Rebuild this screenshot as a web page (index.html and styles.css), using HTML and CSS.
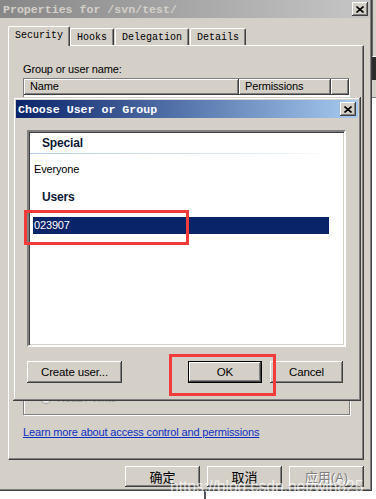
FILE: index.html
```html
<!DOCTYPE html>
<html lang="en">
  <head>
    <meta charset="UTF-8" />
    <title>Properties for /svn/test/</title>
    <link rel="stylesheet" href="styles.css">
  </head>
  <body>
    <div class="screen">
      <div class="window">
        <div class="titlebar inactive">
          <span class="title">Properties for /svn/test/</span>
          <span class="close-btn">
            <svg width="8" height="7" viewBox="0 0 8 7"><path d="M0.5 0.5 L7.5 6.5 M7.5 0.5 L0.5 6.5" stroke="#000" stroke-width="1.6" fill="none"/></svg>
          </span>
        </div>

        <div class="tabs">
          <div class="tab active">Security</div>
          <div class="tab">Hooks</div>
          <div class="tab">Delegation</div>
          <div class="tab">Details</div>
        </div>

        <div class="panel">
          <p class="label">Group or user name:</p>
          <div class="userlist">
            <div class="list-head">
              <div class="col col-name">Name</div>
              <div class="col col-perm">Permissions</div>
              <div class="col col-rest"></div>
            </div>
          </div>
          <div class="perm-box">
            <div class="radio-row"><span class="radio"></span>Read / Write</div>
          </div>
          <a class="learn" href="#">Learn more about access control and permissions</a>
        </div>

        <div class="actions">
          <button class="btn btn-wide">确定</button>
          <button class="btn btn-wide">取消</button>
          <button class="btn btn-wide" disabled>应用(A)</button>
        </div>
      </div>

      <div class="side">
        <div class="side-top"></div>
        <div class="side-dark"></div>
        <div class="side-mid"></div>
      </div>

      <div class="below"><span class="below-line"></span></div>

      <!-- modal over the properties window -->
      <div class="dialog">
        <div class="titlebar active-bar">
          <span class="title">Choose User or Group</span>
          <span class="close-btn">
            <svg width="8" height="7" viewBox="0 0 8 7"><path d="M0.5 0.5 L7.5 6.5 M7.5 0.5 L0.5 6.5" stroke="#000" stroke-width="1.6" fill="none"/></svg>
          </span>
        </div>
        <div class="dialog-body">
          <div class="picklist">
            <div class="group-head">Special</div>
            <div class="item">Everyone</div>
            <div class="group-head no-line">Users</div>
            <div class="item selected">023907</div>
          </div>
          <div class="dialog-actions">
            <button class="btn btn-create">Create user...</button>
            <span class="spacer"></span>
            <button class="btn btn-default">OK</button>
            <button class="btn btn-cancel">Cancel</button>
          </div>
        </div>
      </div>

      <div class="mark mark-user"></div>
      <div class="mark mark-ok"></div>
      <div class="watermark">https://blog.csdn.net/wlh825</div>
    </div>
  </body>
</html>
```

FILE: styles.css
```css
* {
  margin: 0;
  padding: 0;
  box-sizing: border-box;
}

body {
  background: #fff;
  font-family: 'Liberation Sans', Arial, sans-serif;
  font-size: 11px;
  letter-spacing: -0.15px;
  color: #000;
}

.screen {
  position: relative;
  display: grid;
  grid-template-columns: 372px 4px;
  width: 376px;
  height: 499px;
  overflow: hidden;
}

/* Fenêtre principale */
.window {
  width: 372px;
  height: 491px;
  background: #d4d0c8;
  display: flex;
  flex-direction: column;
  box-shadow: inset -1px -1px #404040, inset -2px -2px #808080;
}

.titlebar {
  display: flex;
  align-items: center;
  justify-content: space-between;
  height: 18px;
  padding: 0 2px 0 3px;
}

.titlebar .title {
  font-family: 'Liberation Mono', 'Courier New', monospace;
  font-weight: 700;
  font-size: 11.6px;
  letter-spacing: 0;
}

.titlebar.inactive {
  width: 370px;
  background: linear-gradient(90deg, #878787, #c6c6c6);
  color: #d4d0c8;
}

.titlebar.active-bar {
  background: linear-gradient(90deg, #0a246a, #a6caf0);
  color: #fff;
  padding-left: 2px;
}

.close-btn {
  width: 16px;
  height: 14px;
  display: flex;
  align-items: center;
  justify-content: center;
  background: #d4d0c8;
  box-shadow: inset -1px -1px #404040, inset 1px 1px #fff, inset -2px -2px #808080;
}

/* Onglets */
.tabs {
  display: flex;
  align-items: flex-end;
  height: 20px;
  margin-top: 7px;
  padding-left: 9px;
  position: relative;
  z-index: 1;
}

.tab {
  font-family: 'Liberation Mono', 'Courier New', monospace;
  font-size: 10px;
  letter-spacing: 0;
  height: 17px;
  padding: 3px 6px 0;
  margin-right: 1px;
  border: 1px solid #fff;
  border-right-color: #404040;
  border-bottom: none;
  border-radius: 2px 2px 0 0;
  box-shadow: inset -1px 0 #808080;
}

.tab.active {
  height: 20px;
  padding: 3px 6px 0;
  margin-right: 0;
  margin-left: -1px;
  background: #d4d0c8;
  position: relative;
  top: 1px;
}

.panel {
  margin-left: 8px;
  width: 356px;
  height: 415px;
  border: 1px solid #fff;
  border-right-color: #404040;
  border-bottom-color: #404040;
  box-shadow: inset -1px -1px #808080;
  padding: 17px 0 0 14px;
  display: flex;
  flex-direction: column;
}

.label {
  line-height: 13px;
}

.userlist {
  margin-top: 2px;
  width: 327px;
  height: 120px;
  background: #fff;
  border: 1px solid #808080;
  border-right-color: #fff;
  border-bottom-color: #fff;
}

.list-head {
  display: flex;
  height: 16px;
}

.col {
  background: #d4d0c8;
  line-height: 15px;
  padding-left: 6px;
  box-shadow: inset -1px -1px #404040, inset 1px 1px #fff, inset -2px -2px #808080;
}

.col-name { width: 215px; }
.col-perm { width: 92px; }
.col-rest { flex: 1; }

.perm-box {
  margin-top: 50px;
  width: 327px;
  height: 167px;
  border: 1px solid #808080;
  box-shadow: 1px 1px #fff, inset 1px 1px #fff;
  display: flex;
  align-items: flex-end;
  padding: 0 0 10px 16px;
  color: #a0a0a0;
}

.radio-row {
  display: flex;
  align-items: center;
  gap: 5px;
}

.radio {
  width: 12px;
  height: 12px;
  border-radius: 50%;
  border: 1px solid #a0a0a0;
  background: #eee;
}

.learn {
  margin-top: 11px;
  color: #0b2ec2;
  text-decoration: underline;
  line-height: 13px;
}

.actions {
  display: flex;
  justify-content: flex-end;
  gap: 7px;
  margin-top: 6px;
  padding-right: 8px;
}

/* Boutons classiques */
.btn {
  font-family: 'Liberation Sans', 'Noto Sans CJK SC', sans-serif;
  font-size: 11.5px;
  letter-spacing: -0.15px;
  background: #d4d0c8;
  border: none;
  color: #000;
  height: 22px;
  box-shadow: inset -1px -1px #404040, inset 1px 1px #fff, inset -2px -2px #808080;
}

.btn-wide {
  width: 75px;
  height: 21px;
  font-size: 13px;
  letter-spacing: 0;
}

.btn:disabled {
  color: #808080;
  text-shadow: 1px 1px #fff;
}

.side {
  display: flex;
  flex-direction: column;
}

.side-top {
  height: 57px;
  background: #d4d0c8;
  border-left: 1px solid #666;
  border-bottom: 1px solid #fff;
}

.side-dark {
  height: 23px;
  background: #2c2c2c;
}

.side-mid {
  height: 18px;
  background: #d4d0c8;
  border-bottom: 1px solid #808080;
}

.below {
  grid-column: 1 / 3;
  padding-left: 204px;
}

.below-line {
  display: block;
  width: 2px;
  height: 8px;
  background: #555;
}

/* Fenêtre modale */
.dialog {
  position: absolute;
  left: 13px;
  top: 97px;
  width: 348px;
  height: 304px;
  background: #d4d0c8;
  padding: 3px;
  box-shadow: inset -1px -1px #404040, inset 1px 1px #d4d0c8, inset -2px -2px #808080, inset 2px 2px #fff;
  display: flex;
  flex-direction: column;
}

.dialog-body {
  padding: 12px 12px 0 11px;
}

.picklist {
  width: 319px;
  height: 217px;
  background: #fff;
  border: 2px solid;
  border-color: #808080 #fff #fff #808080;
  box-shadow: inset 1px 1px #404040, inset -1px -1px #d4d0c8;
  padding: 1px 0 0 1px;
}

.group-head {
  height: 21px;
  line-height: 20px;
  padding-left: 12px;
  font-weight: 700;
  font-size: 12px;
  color: #0c1838;
  width: 300px;
  border-bottom: 1px solid;
  border-image: linear-gradient(90deg, #b4cdea, #e4eef8 80%, #fff) 1;
}

.group-head.no-line {
  border-bottom: none;
  margin-top: 9px;
}

.item {
  height: 18px;
  line-height: 18px;
  padding-left: 4px;
  margin-top: 6px;
}

.item.selected {
  margin: 9px 0 0 3px;
  width: 296px;
  height: 17px;
  line-height: 17px;
  padding-left: 1px;
  background: #0a246a;
  color: #fff;
}

.dialog-actions {
  display: flex;
  margin-top: 14px;
}

.btn-create { width: 95px; }
.spacer { flex: 1; }

.btn-default {
  width: 74px;
  margin-right: 8px;
  box-shadow: inset 0 0 0 1px #000, inset -2px -2px #404040, inset 2px 2px #fff, inset -3px -3px #808080;
}

.btn-cancel {
  width: 73px;
  margin-right: 3px;
}

/* Annotations rouges */
.mark {
  position: absolute;
  border: 3px solid #f23b3b;
}

.mark-user {
  left: 24px;
  top: 210px;
  width: 165px;
  height: 35px;
}

.mark-ok {
  left: 169px;
  top: 354px;
  width: 107px;
  height: 42px;
}

.watermark {
  position: absolute;
  left: 170px;
  top: 478px;
  font-size: 15.6px;
  letter-spacing: 0;
  color: rgba(255, 255, 255, 0.7);
  white-space: nowrap;
}
```
